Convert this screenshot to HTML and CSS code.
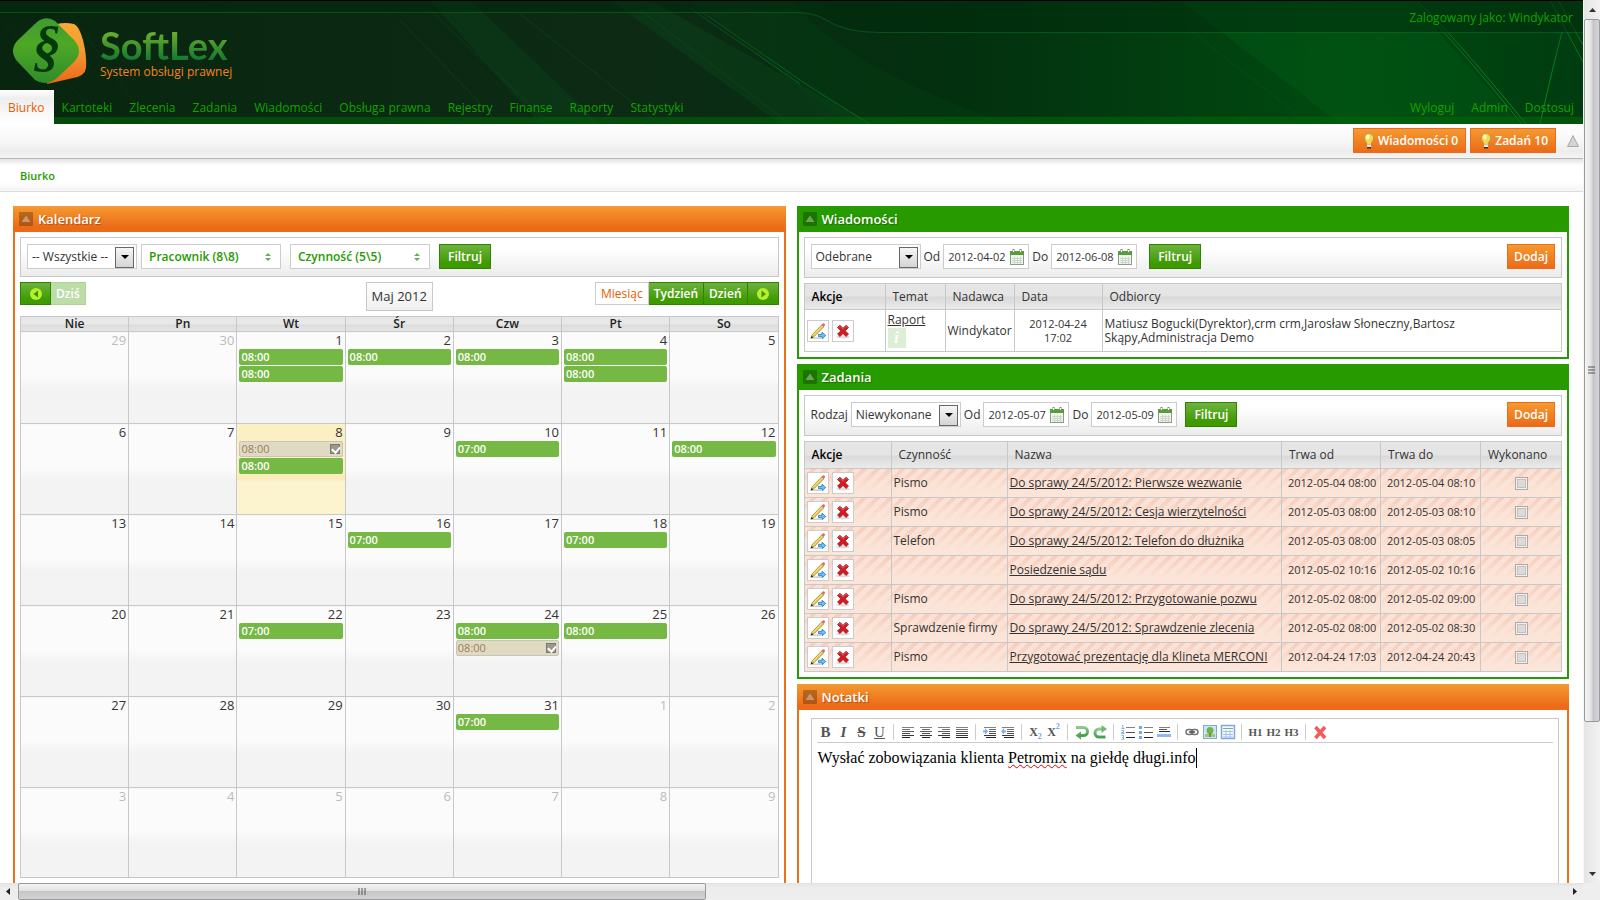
FILE: index.html
```html
<!DOCTYPE html>
<html lang="pl">
<head>
<meta charset="utf-8">
<title>SoftLex - Biurko</title>
<link rel="stylesheet" href="styles.css">
</head>
<body>
<svg class="defs" aria-hidden="true">
  <defs>
    <linearGradient id="gLeaf" x1="0" y1="0" x2="0" y2="1"><stop offset="0" stop-color="#3f9a33"/><stop offset=".4" stop-color="#4ea824"/><stop offset="1" stop-color="#2f8b2c"/></linearGradient>
    <linearGradient id="gSun" x1="0" y1="0" x2="0" y2="1"><stop offset="0" stop-color="#f9a933"/><stop offset=".45" stop-color="#f59a31"/><stop offset="1" stop-color="#ec6519"/></linearGradient>
    <linearGradient id="gLine" x1="0" y1="0" x2="0" y2="1"><stop offset="0" stop-color="#888"/><stop offset="1" stop-color="#222"/></linearGradient>
    <linearGradient id="gGrn" x1="0" y1="0" x2="0" y2="1"><stop offset="0" stop-color="#8fc98a"/><stop offset="1" stop-color="#45a050"/></linearGradient>
    <symbol id="cal" viewBox="0 0 14 16"><rect x=".5" y="2.5" width="13" height="13" fill="#f1f4ef" stroke="#8d9a88"/><rect x="0" y="2" width="14" height="4" fill="#55a032"/><path d="M3.500 0v4M10.500 0v4" stroke="#7d8a78" stroke-width="2"/><path d="M3.500 1v2M10.500 1v2" stroke="#fff"/><path d="M2 9.500h10M2 11.500h10M2 13.500h10M4.500 8v7M7.500 8v7M10.500 8v7" stroke="#c4d2c0" stroke-width=".8"/></symbol>
    <symbol id="edit" viewBox="0 0 18 18"><path d="M3 16.200h9" stroke="#ccc" stroke-width="1.500"/><path d="M2 16l1.200-3.300L12.700 3l1.900 1.900-9.400 9.700z" fill="#e8cf4d" stroke="#8a7420" stroke-width=".7"/><path d="M4 13.300L13.300 4" stroke="#f9ee9c" stroke-width=".8"/><path d="M12.600 2.800l1.100-1.200q1-.8 1.900.1t.2 1.900L14.700 4.900z" fill="#e8626b"/><path d="M1.500 16.700l1.200-2.700 1.500 1.500z" fill="#222"/><path d="M9.500 12.300h3.500V10.200l3.800 3.300-3.800 3.300V14.700H9.500z" fill="#6cc0f6" stroke="#1767ae" stroke-width=".7"/></symbol>
    <symbol id="del" viewBox="0 0 18 18"><ellipse cx="9" cy="15" rx="7" ry="1.500" fill="#ddd"/><path d="M3.500 5.500L6 3.300l3 3 3-3 2.500 2.200-3.300 3.300 3.300 3.300-2.500 2.400-3-3-3 3-2.500-2.400 3.300-3.300z" fill="#cf1c22" stroke="#a30f14" stroke-width=".8"/><path d="M4.500 5.500L6 4.300l3 3 3-3 1.500 1.200" stroke="#e66" fill="none" stroke-width=".8"/></symbol>
    <symbol id="bulb" viewBox="0 0 12 16"><path d="M6 .5a4.500 4.500 0 0 1 4.600 4.600C10.600 8 8.400 8.500 8 11.500H4C3.600 8.500 1.400 8 1.400 5.100A4.500 4.500 0 0 1 6 .5z" fill="#efd95a" stroke="#b9952a" stroke-width=".8"/><ellipse cx="4.800" cy="4" rx="1.800" ry="2.400" fill="#fffbd0"/><path d="M4 11.500h4V14H4z" fill="#e4ecf2"/><path d="M4 14h4v1.500H4z" fill="#33302a"/></symbol>
    <symbol id="up" viewBox="0 0 14 14"><rect width="14" height="14" rx="1" fill="#000" fill-opacity=".25"/><path d="M7 3.500L11.500 10h-9z" fill="#fff" fill-opacity=".35"/></symbol>
    <symbol id="updn" viewBox="0 0 6 8"><path d="M3 0l3 3H0zM3 8l3-3H0z" fill="#6aad4a"/></symbol>
  </defs>
</svg>

<div class="window">
<div class="page">
  <header class="top">
    <svg class="rays" viewBox="0 0 1583 124" preserveAspectRatio="xMaxYMid slice" aria-hidden="true">
      <defs>
        <linearGradient id="gBase"><stop offset="0" stop-color="#08260f"/><stop offset=".4" stop-color="#0d2a15"/><stop offset=".6" stop-color="#03300f"/><stop offset=".85" stop-color="#004a10"/><stop offset="1" stop-color="#003c10"/></linearGradient>
        <linearGradient id="gRay" x1="0" y1="0" x2="1" y2="1"><stop offset="0" stop-color="#0a7a20" stop-opacity=".35"/><stop offset="1" stop-color="#11a02c" stop-opacity=".75"/></linearGradient>
      </defs>
      <rect width="1583" height="124" fill="url(#gBase)"/>
      <path d="M430 0l110 124h60L470 0zM610 0l170 124h90L650 0z" fill="#0b4a1c" fill-opacity=".35"/>
      <path d="M1180 0l160 124h180L1410 0z" fill="#006b18" fill-opacity=".25"/>
      <path d="M690 0Q760 60 850 124H1010Q850 70 790 0z" fill="#005016" fill-opacity=".2"/>
      <path d="M400 20l100 104M430 10l120 114M520 14l140 110M640 10l150 114M1190 30l120 94M1250 0l150 124M1340 0l135 124" stroke="#0f5a20" stroke-opacity=".4" fill="none"/>
      <path d="M0 20l110 104M60 0l90 124" stroke="#0f5a20" stroke-opacity=".2" fill="none"/>
      <path d="M690 8L800 84M702 12L800 80Q830 100 870 124M1412 0Q1447 32 1522 124M1416 0Q1451 32 1526 124M1550 0l33 62M1558 0l25 45M1540 124Q1552 70 1562 32" stroke="url(#gRay)" fill="none"/>
      <path d="M1 1h1582v31H880Q845 32 825 18Q815 12 795 12H0V1z" fill="#002a0c" fill-opacity=".5"/>
      <path d="M0 12.500h795q20 0 30 7 20 13 55 13h703" fill="none" stroke="#0a6a1f" stroke-opacity=".6"/>
      <path d="M0 117h1583v7H0z" fill="#006a08" fill-opacity=".55"/>
      <path d="M0 0h1583v1H0z"/>
    </svg>
    <div class="brand-row">
      <div class="brand">
        <svg class="mark" viewBox="0 0 74 66" role="img" aria-label="SoftLex">
          <path d="M44 6Q52 4 61 6Q66 8 70 22Q74 38 73 50Q72 58 60 60L34 66z" fill="url(#gSun)"/>
          <path d="M24 4Q33-3 42 3L61 22Q71 33 61 44L44 60Q33 69 22 62L4 43Q-4 33 4 23z" fill="url(#gLeaf)"/>
          <text x="34" y="47" text-anchor="middle" class="para">§</text>
        </svg>
        <div class="names"><span class="name">SoftLex</span><span class="tagline">System obsługi prawnej</span></div>
      </div>
      <div class="login">Zalogowany jako: Windykator</div>
    </div>
    <nav class="menu">
      <a class="active" href="#">Biurko</a><a href="#">Kartoteki</a><a href="#">Zlecenia</a><a href="#">Zadania</a><a href="#">Wiadomości</a><a href="#">Obsługa prawna</a><a href="#">Rejestry</a><a href="#">Finanse</a><a href="#">Raporty</a><a href="#">Statystyki</a>
      <span class="spring"></span>
      <a href="#">Wyloguj</a><a href="#">Admin</a><a href="#">Dostosuj</a>
    </nav>
  </header>
  <div class="alerts">
    <button class="btn orange"><svg class="bulb"><use href="#bulb"/></svg>Wiadomości 0</button>
    <button class="btn orange"><svg class="bulb"><use href="#bulb"/></svg>Zadań 10</button>
    <svg class="tri" viewBox="0 0 12 12" aria-hidden="true"><path d="M6 .5L11.500 11.500H.5z" fill="#d4d4d4" stroke="#aaa"/></svg>
  </div>
  <div class="crumbs"><a href="#">Biurko</a></div>

  <main class="desk">
    <section class="panel orange-panel">
      <h2><svg class="fold"><use href="#up"/></svg>Kalendarz</h2>
      <div class="body">
        <form class="filter">
          <span class="sel"><select aria-label="Rodzaj kalendarza"><option>-- Wszystkie --</option></select></span>
          <button type="button" class="multi">Pracownik (8\8)<svg class="updn"><use href="#updn"/></svg></button>
          <button type="button" class="multi second">Czynność (5\5)<svg class="updn"><use href="#updn"/></svg></button>
          <button type="button" class="btn green wide">Filtruj</button>
        </form>
        <div class="calbar">
          <div class="group">
            <button class="btn green arrow" aria-label="Poprzedni"><svg viewBox="0 0 12 12"><circle cx="6" cy="6" r="6" fill="#b5f02a"/><path d="M8 2.500v7L3.500 6z" fill="#3d8e0c"/></svg></button><button class="btn today" disabled>Dziś</button>
          </div>
          <div class="month">Maj 2012</div>
          <div class="group right">
            <button class="btn view">Miesiąc</button><button class="btn green">Tydzień</button><button class="btn green">Dzień</button><button class="btn green arrow" aria-label="Następny"><svg viewBox="0 0 12 12"><circle cx="6" cy="6" r="6" fill="#b5f02a"/><path d="M4.500 2.500v7L9 6z" fill="#3d8e0c"/></svg></button>
          </div>
        </div>
        <table class="cal">
          <thead><tr><th>Nie</th><th>Pn</th><th>Wt</th><th>Śr</th><th>Czw</th><th>Pt</th><th>So</th></tr></thead>
          <tbody>
            <tr><td class="off"><b>29</b></td><td class="off"><b>30</b></td><td><b>1</b><i>08:00</i><i>08:00</i></td><td><b>2</b><i>08:00</i></td><td><b>3</b><i>08:00</i></td><td><b>4</b><i>08:00</i><i>08:00</i></td><td><b>5</b></td></tr>
            <tr><td><b>6</b></td><td><b>7</b></td><td class="now"><b>8</b><i class="done">08:00<input type="checkbox" checked aria-label="Wykonano"></i><i>08:00</i></td><td><b>9</b></td><td><b>10</b><i>07:00</i></td><td><b>11</b></td><td><b>12</b><i>08:00</i></td></tr>
            <tr><td><b>13</b></td><td><b>14</b></td><td><b>15</b></td><td><b>16</b><i>07:00</i></td><td><b>17</b></td><td><b>18</b><i>07:00</i></td><td><b>19</b></td></tr>
            <tr><td><b>20</b></td><td><b>21</b></td><td><b>22</b><i>07:00</i></td><td><b>23</b></td><td><b>24</b><i>08:00</i><i class="done">08:00<input type="checkbox" checked aria-label="Wykonano"></i></td><td><b>25</b><i>08:00</i></td><td><b>26</b></td></tr>
            <tr><td><b>27</b></td><td><b>28</b></td><td><b>29</b></td><td><b>30</b></td><td><b>31</b><i>07:00</i></td><td class="off"><b>1</b></td><td class="off"><b>2</b></td></tr>
            <tr><td class="off"><b>3</b></td><td class="off"><b>4</b></td><td class="off"><b>5</b></td><td class="off"><b>6</b></td><td class="off"><b>7</b></td><td class="off"><b>8</b></td><td class="off"><b>9</b></td></tr>
          </tbody>
        </table>
      </div>
    </section>

    <div class="column">
      <section class="panel green-panel">
        <h2><svg class="fold"><use href="#up"/></svg>Wiadomości</h2>
        <div class="body">
          <form class="filter">
            <span class="sel"><select aria-label="Folder"><option>Odebrane</option></select></span>
            <label for="mOd">Od</label><span class="date"><input id="mOd" type="text" value="2012-04-02"><svg><use href="#cal"/></svg></span>
            <label for="mDo">Do</label><span class="date"><input id="mDo" type="text" value="2012-06-08"><svg><use href="#cal"/></svg></span>
            <button type="button" class="btn green wide submit">Filtruj</button>
            <button type="button" class="btn orange add">Dodaj</button>
          </form>
          <table class="list mail">
            <colgroup><col class="w81"><col class="w60"><col class="w69"><col class="w88"><col></colgroup>
            <thead><tr><th class="sorted">Akcje</th><th>Temat</th><th>Nadawca</th><th>Data</th><th>Odbiorcy</th></tr></thead>
            <tbody><tr>
              <td><button class="ico" aria-label="Edytuj"><svg><use href="#edit"/></svg></button><button class="ico" aria-label="Usuń"><svg><use href="#del"/></svg></button></td>
              <td class="subject"><a href="#">Raport</a><span class="info">i</span></td>
              <td>Windykator</td><td class="when">2012-04-24 17:02</td>
              <td><div class="people">Matiusz Bogucki(Dyrektor),crm crm,Jarosław Słoneczny,Bartosz Skąpy,Administracja Demo</div></td>
            </tr></tbody>
          </table>
        </div>
      </section>

      <section class="panel green-panel">
        <h2><svg class="fold"><use href="#up"/></svg>Zadania</h2>
        <div class="body">
          <form class="filter">
            <label for="zR">Rodzaj</label><span class="sel"><select id="zR"><option>Niewykonane</option></select></span>
            <label for="zOd">Od</label><span class="date"><input id="zOd" type="text" value="2012-05-07"><svg><use href="#cal"/></svg></span>
            <label for="zDo">Do</label><span class="date"><input id="zDo" type="text" value="2012-05-09"><svg><use href="#cal"/></svg></span>
            <button type="button" class="btn green wide near">Filtruj</button>
            <button type="button" class="btn orange add">Dodaj</button>
          </form>
          <table class="list tasks">
            <colgroup><col class="w87"><col class="w116"><col><col class="w99"><col class="w100"><col class="w81"></colgroup>
            <thead><tr><th class="sorted">Akcje</th><th>Czynność</th><th>Nazwa</th><th>Trwa od</th><th>Trwa do</th><th>Wykonano</th></tr></thead>
            <tbody>
              <tr><td><button class="ico" aria-label="Edytuj"><svg><use href="#edit"/></svg></button><button class="ico" aria-label="Usuń"><svg><use href="#del"/></svg></button></td><td>Pismo</td><td><a href="#">Do sprawy 24/5/2012: Pierwsze wezwanie</a></td><td class="when">2012-05-04 08:00</td><td class="when">2012-05-04 08:10</td><td class="chk"><input type="checkbox" aria-label="Wykonano"></td></tr>
              <tr><td><button class="ico" aria-label="Edytuj"><svg><use href="#edit"/></svg></button><button class="ico" aria-label="Usuń"><svg><use href="#del"/></svg></button></td><td>Pismo</td><td><a href="#">Do sprawy 24/5/2012: Cesja wierzytelności</a></td><td class="when">2012-05-03 08:00</td><td class="when">2012-05-03 08:10</td><td class="chk"><input type="checkbox" aria-label="Wykonano"></td></tr>
              <tr><td><button class="ico" aria-label="Edytuj"><svg><use href="#edit"/></svg></button><button class="ico" aria-label="Usuń"><svg><use href="#del"/></svg></button></td><td>Telefon</td><td><a href="#">Do sprawy 24/5/2012: Telefon do dłużnika</a></td><td class="when">2012-05-03 08:00</td><td class="when">2012-05-03 08:05</td><td class="chk"><input type="checkbox" aria-label="Wykonano"></td></tr>
              <tr><td><button class="ico" aria-label="Edytuj"><svg><use href="#edit"/></svg></button><button class="ico" aria-label="Usuń"><svg><use href="#del"/></svg></button></td><td></td><td><a href="#">Posiedzenie sądu</a></td><td class="when">2012-05-02 10:16</td><td class="when">2012-05-02 10:16</td><td class="chk"><input type="checkbox" aria-label="Wykonano"></td></tr>
              <tr><td><button class="ico" aria-label="Edytuj"><svg><use href="#edit"/></svg></button><button class="ico" aria-label="Usuń"><svg><use href="#del"/></svg></button></td><td>Pismo</td><td><a href="#">Do sprawy 24/5/2012: Przygotowanie pozwu</a></td><td class="when">2012-05-02 08:00</td><td class="when">2012-05-02 09:00</td><td class="chk"><input type="checkbox" aria-label="Wykonano"></td></tr>
              <tr><td><button class="ico" aria-label="Edytuj"><svg><use href="#edit"/></svg></button><button class="ico" aria-label="Usuń"><svg><use href="#del"/></svg></button></td><td>Sprawdzenie firmy</td><td><a href="#">Do sprawy 24/5/2012: Sprawdzenie zlecenia</a></td><td class="when">2012-05-02 08:00</td><td class="when">2012-05-02 08:30</td><td class="chk"><input type="checkbox" aria-label="Wykonano"></td></tr>
              <tr><td><button class="ico" aria-label="Edytuj"><svg><use href="#edit"/></svg></button><button class="ico" aria-label="Usuń"><svg><use href="#del"/></svg></button></td><td>Pismo</td><td><a href="#">Przygotować prezentację dla Klineta MERCONI</a></td><td class="when">2012-04-24 17:03</td><td class="when">2012-04-24 20:43</td><td class="chk"><input type="checkbox" aria-label="Wykonano"></td></tr>
            </tbody>
          </table>
        </div>
      </section>

      <section class="panel orange-panel">
        <h2><svg class="fold"><use href="#up"/></svg>Notatki</h2>
        <div class="body notes">
          <div class="editor">
            <div class="tools">
              <button class="big bold">B</button><button class="big ital">I</button><button class="big strike">S</button><button class="big under">U</button>
              <hr>
              <button aria-label="Do lewej"><svg viewBox="0 0 16 16"><path d="M2 3h12v1H2zM2 5h8v1H2zM2 7h12v1H2zM2 9h8v1H2zM2 11h12v1H2zM2 13h8v1H2z" fill="url(#gLine)"/></svg></button>
              <button aria-label="Do środka"><svg viewBox="0 0 16 16"><path d="M2 3h12v1H2zM4 5h8v1H4zM2 7h12v1H2zM4 9h8v1H4zM2 11h12v1H2zM4 13h8v1H4z" fill="url(#gLine)"/></svg></button>
              <button aria-label="Do prawej"><svg viewBox="0 0 16 16"><path d="M2 3h12v1H2zM6 5h8v1H6zM2 7h12v1H2zM6 9h8v1H6zM2 11h12v1H2zM6 13h8v1H6z" fill="url(#gLine)"/></svg></button>
              <button aria-label="Wyjustuj"><svg viewBox="0 0 16 16"><path d="M2 3h12v1H2zM2 5h12v1H2zM2 7h12v1H2zM2 9h12v1H2zM2 11h12v1H2zM2 13h12v1H2z" fill="url(#gLine)"/></svg></button>
              <hr>
              <button aria-label="Zwiększ wcięcie"><svg viewBox="0 0 16 16"><path d="M2 3h12v1H2zM7 5h7v1H7zM7 7h7v1H7zM7 9h7v1H7zM2 11h12v1H2zM4 13h10v1H4z" fill="url(#gLine)"/><path d="M1 6.500h2V4l3 3.500-3 3V8.500H1z" fill="#78aef0"/></svg></button>
              <button aria-label="Zmniejsz wcięcie"><svg viewBox="0 0 16 16"><path d="M2 3h12v1H2zM7 5h7v1H7zM7 7h7v1H7zM7 9h7v1H7zM2 11h12v1H2zM4 13h10v1H4z" fill="url(#gLine)"/><path d="M6 6.500H4V4L1 7.500l3 3V8.500h2z" fill="#78aef0"/></svg></button>
              <hr>
              <button class="script">X<sub>2</sub></button><button class="script">X<sup>2</sup></button>
              <hr>
              <button aria-label="Cofnij"><svg viewBox="0 0 16 16"><path d="M2 3.500h7.500a4 4 0 0 1 0 8H6" fill="none" stroke="url(#gGrn)" stroke-width="3"/><path d="M7 7.500v8L1.500 11.500z" fill="#52a852"/></svg></button>
              <button aria-label="Ponów"><svg viewBox="0 0 16 16"><path d="M11 5h-4a4 4 0 0 0 0 8h6.500" fill="none" stroke="url(#gGrn)" stroke-width="3"/><path d="M9.500 1v8l5.500-4z" fill="#70b970"/></svg></button>
              <hr>
              <button aria-label="Lista numerowana"><svg viewBox="0 0 16 16"><path d="M6 3h9v1H6zM6 8h9v1H6zM6 13h9v1H6z" fill="url(#gLine)"/><path d="M2 1.500h1v3M1.500 4.500h3M1.500 6.500h2v2h-2v1h3M1.500 11.500h2v4h-2M2 13.500h2" fill="none" stroke="#78a8ea" stroke-width=".9"/></svg></button>
              <button aria-label="Lista punktowana"><svg viewBox="0 0 16 16"><path d="M6 3h9v1H6zM6 8h9v1H6zM6 13h9v1H6z" fill="url(#gLine)"/><path d="M1 2h3v3H1zM1 7h3v3H1zM1 12h3v3H1z" fill="#78a8ea"/></svg></button>
              <button aria-label="Linia"><svg viewBox="0 0 16 16"><path d="M3 3h11v1H3zM3 5h8v1H3zM3 7h11v1H3z" fill="url(#gLine)"/><path d="M1 10h14v3H1z" fill="#8fb9f2"/></svg></button>
              <hr>
              <button aria-label="Odnośnik"><svg viewBox="0 0 16 16"><rect x="2" y="5.500" width="7" height="5" rx="2.500" fill="none" stroke="#777" stroke-width="1.500"/><rect x="7" y="5.500" width="7" height="5" rx="2.500" fill="none" stroke="#777" stroke-width="1.500"/><path d="M5 8h6" stroke="#555" stroke-width="1.500"/></svg></button>
              <button aria-label="Obraz"><svg viewBox="0 0 16 16"><rect x="1.500" y="1.500" width="13" height="13" fill="#cfe2fb" stroke="#82a9de"/><rect x="3" y="10" width="10" height="3" fill="#9ccb6a"/><circle cx="8" cy="6.500" r="3.500" fill="#6cb64c"/><path d="M8 9v4" stroke="#8a6a3a" stroke-width="1.500"/></svg></button>
              <button aria-label="Tabela"><svg viewBox="0 0 16 16"><rect x="1.500" y="1.500" width="13" height="13" fill="#f3f8ff" stroke="#82a9de" stroke-width="1.500"/><path d="M3 4.500h10" stroke="#7ab85a"/><path d="M3 7.500h10M3 10.500h10M3 13h10M6 6v8M10 6v8" stroke="#a5c2ea"/></svg></button>
              <hr>
              <button class="h">H1</button><button class="h">H2</button><button class="h">H3</button>
              <hr>
              <button aria-label="Usuń formatowanie"><svg viewBox="0 0 16 16"><path d="M3.500 3l9.500 11M13 3L3.500 14" stroke="#f25b5b" stroke-width="3.500"/></svg></button>
            </div>
            <div class="text" contenteditable="true" spellcheck="false">Wysłać zobowiązania klienta <span class="typo">Petromix</span> na giełdę długi.info<span class="caret"></span></div>
          </div>
        </div>
      </section>
    </div>
  </main>
</div>
<div class="vbar" aria-hidden="true">
  <svg viewBox="0 0 17 19"><path d="M8.500 8l3.500 4H5z" fill="#333"/></svg>
  <div class="vthumb"><svg viewBox="0 0 8 9"><path d="M0 1h7M0 4h7M0 7h7" stroke="#555"/></svg></div>
  <div class="vrest"></div>
  <svg viewBox="0 0 17 19"><path d="M8.500 12L12 8H5z" fill="#333"/></svg>
</div>
<div class="hbar" aria-hidden="true">
  <svg viewBox="0 0 18 17"><path d="M6 8.500l4-3.500v7z" fill="#222"/></svg>
  <div class="hthumb"><svg viewBox="0 0 9 8"><path d="M1 0v7M4 0v7M7 0v7" stroke="#555"/></svg></div>
  <div class="hrest"></div>
  <svg viewBox="0 0 18 17"><path d="M12 8.500L8 5v7z" fill="#222"/></svg>
</div>
<div class="corner"></div>
</div>
</body>
</html>
```
FILE: styles.css
```css
* { box-sizing: border-box; }
body {
  margin: 0;
  font: 12px/14px "Open Sans", "Noto Sans", sans-serif;
  color: #333;
  background: #fff;
}
button, input, select { font: inherit; color: inherit; margin: 0; border-radius: 0; }
button { cursor: pointer; }
.defs { display: block; width: 0; height: 0; }

.window {
  display: grid;
  grid-template: minmax(0, 1fr) 17px / minmax(0, 1fr) 17px;
  height: 100vh;
  overflow: hidden;
}
.page { overflow: hidden; background: #fff; }

/* header */
.top { position: relative; height: 124px; display: flex; flex-direction: column; background: #03300f; }
.rays { position: absolute; inset: 0; width: 100%; height: 100%; }
.brand-row { position: relative; flex: 1; display: flex; justify-content: space-between; }
.brand { display: flex; padding: 18px 0 0 13px; gap: 13px; }
.mark { width: 74px; height: 66px; overflow: visible; }
.para { font: italic bold 56px "Liberation Serif", serif; fill: #033a0b; }
.names { display: flex; flex-direction: column; padding-top: 7px; }
.name {
  font: bold 38px/40px Lato, sans-serif;
  background: linear-gradient(#6aac2c 20%, #187a30 85%);
  -webkit-background-clip: text;
  background-clip: text;
  color: transparent;
}
.tagline { color: #f5821f; line-height: 14px; }
.login { padding: 11px 10px 0 0; color: #12a300; }
.menu { position: relative; display: flex; height: 34px; color: #12a300; }
.menu a { padding: 11px 9px 0 8px; color: inherit; text-decoration: none; }
.menu .active { color: #e65c00; background: linear-gradient(#fff, #eee 25%, #fff); }
.spring { flex: 1; }

.alerts {
  display: flex; justify-content: flex-end; align-items: flex-start; gap: 4px;
  height: 35px; padding: 4px 4px 0;
  background: linear-gradient(#fff, #f8f8f8 45%, #ededed 80%, #f4f4f4);
  border-bottom: 1px solid #b8b8b8;
}
.bulb { width: 12px; height: 16px; margin-right: 3px; }
.tri { width: 12px; height: 12px; margin: 7px 0 0 7px; }
.crumbs {
  height: 33px; padding: 10px 20px;
  background: linear-gradient(#e4e4e4, #fff 20%, #fff 70%, #f5f5f5);
  border-bottom: 1px solid #ddd;
  font-size: 11px;
}
.crumbs a { color: #279a00; text-decoration: none; font-weight: 600; }

/* buttons */
.btn {
  display: inline-flex; align-items: center; justify-content: center;
  height: 25px; padding: 0 6px;
  border: 1px solid #2f8300; color: #fff; font-weight: 600;
  white-space: nowrap;
}
.wide { padding: 0 8px; }
.green { background: linear-gradient(#6db33f, #3f9a00 80%); }
.orange { background: linear-gradient(#f49a30, #ec6a18); border-color: #ec6a18; }
.alerts .btn { padding: 0 7px 0 9px; }

/* panels */
.desk {
  display: grid; grid-template-columns: minmax(0, 1fr) minmax(0, 1fr); gap: 11px;
  padding: 14px 14px 0 13px; align-items: start;
}
.column { display: grid; gap: 5px; }
.panel { border: 2px solid #ec6f1a; border-top: 0; }
.panel h2 {
  display: flex; align-items: center; gap: 5px;
  height: 26px; margin: 0 -2px; padding: 0 6px;
  color: #fff; font: 600 13px/26px "Open Sans", sans-serif;
  text-shadow: 1px 1px 1px rgba(0, 0, 0, .3);
  background: linear-gradient(#f49a30, #ec6a18 85%);
}
.green-panel { border-color: #279a00; }
.green-panel h2 { background: #279a00; }
.fold { width: 14px; height: 14px; }
.body { padding: 5px; }
.orange-panel .body { padding-bottom: 12px; }

.filter {
  display: flex; align-items: center; gap: 4px;
  height: 40px; margin: 0 0 5px; padding: 0 6px 1px;
  border: 1px solid #c8c8c8;
  background: linear-gradient(#fff 30%, #ececec);
}
.column .filter { height: 41px; gap: 3px; padding-bottom: 2px; }
.sel { position: relative; width: 110px; height: 25px; border: 1px solid #ccc; background: #fff; }
.sel select {
  appearance: none; width: 100%; height: 23px; padding: 0 22px 0 4px;
  border: 0; background: none;
}
.sel::before {
  content: ""; position: absolute; right: 2px; top: 2px; width: 17px; height: 19px;
  border: 1px solid #666; background: linear-gradient(#f6f6f6, #d4d4d4); pointer-events: none;
}
.sel::after {
  content: ""; position: absolute; right: 7px; top: 10px;
  border: 4px solid transparent; border-top-color: #000; border-bottom: 0; pointer-events: none;
}
.multi {
  display: flex; align-items: center; justify-content: space-between;
  width: 140px; height: 25px; padding: 0 9px 0 7px;
  border: 1px solid #ccc; background: #fff; color: #279a00; font-weight: 600;
}
.second { margin: 0 5px; }
.updn { width: 6px; height: 8px; }
.date {
  display: flex; align-items: center; justify-content: space-between;
  width: 86px; height: 25px; padding: 0 4px; border: 1px solid #ccc; background: #fff;
}
.date input { width: 60px; padding: 0; border: 0; background: none; font-size: 11px; outline: 0; }
.date svg { width: 14px; height: 16px; flex: none; }
.submit { margin-left: 9px; }
.near { margin-left: 5px; }
.add { margin-left: auto; }

.calbar { display: grid; grid-template-columns: 1fr auto 1fr; align-items: start; margin-bottom: 5px; }
.group { display: flex; }
.group .btn { height: 23px; padding: 0 5px; }
.group .btn + .btn { border-left-width: 0; }
.group .arrow { width: 31px; }
.arrow svg { width: 12px; height: 12px; }
.group .today { background: #bcdca8; border-color: #b0d09c; }
.right { justify-content: flex-end; }
.group .view { background: #fff; border-color: #ccc; color: #e65c00; font-weight: 400; }
.month {
  height: 29px; padding: 0 5px; border: 1px solid #c8c8c8; line-height: 27px; font-size: 13px;
  background: linear-gradient(#fff, #f0f0f0);
}

/* calendar */
.cal { width: 100%; table-layout: fixed; border-collapse: collapse; }
.cal th, .cal td { border: 1px solid #c8c8c8; padding: 0; }
.cal th { height: 15px; font-weight: 600; color: #222; background: linear-gradient(#e8e8e8 50%, #dcdcdc 50%, #e4e4e4); }
.cal td { height: 91px; padding: 1px 2px 0; vertical-align: top; background: linear-gradient(#fbfbfb 48%, #f3f3f3 62%); }
.cal tr:first-child td { height: 92px; }
.cal tr:last-child td { height: 90px; }
.cal b { display: block; height: 16px; font: 13px/15px "Open Sans", sans-serif; text-align: right; }
.cal .off b { color: #bbb; }
.cal .now { background: linear-gradient(#fbf0c4 50%, #faebb8 60%, #fcf3cf 64%); }
.cal i {
  display: flex; align-items: center; justify-content: space-between;
  height: 16px; margin-bottom: 1px; padding: 0 2px;
  border-radius: 2px; background: #76b844; color: #fff;
  font: 600 11px/14px "Open Sans", sans-serif;
}
.cal .done { border: 1px solid #c8c4b8; background: #e1dac3; color: #997f5c; font-weight: 400; padding: 0 2px 0 1px; }
.done input {
  appearance: none; position: relative; width: 10px; height: 10px;
  border: 1px solid #777; background: #9c988a;
}
.done input::after {
  content: ""; position: absolute; left: 2px; top: 0; width: 4px; height: 6px;
  border: solid #fff; border-width: 0 2px 2px 0; transform: rotate(42deg);
}

/* lists */
.list { width: 100%; table-layout: fixed; border-collapse: collapse; }
.list th, .list td { border: 1px solid #c8c8c8; padding: 0 2px; text-align: left; }
.list th { height: 27px; padding: 0 7px; font-weight: 400; background: linear-gradient(#e5e5e5 50%, #d9d9d9 50%, #ebebeb); }
.list .sorted { color: #000; font-weight: 600; }
.list td { height: 29px; white-space: nowrap; }
.list a { color: #333; }
.mail th { height: 26px; }
.mail td { height: 42px; }
.mail .when { white-space: normal; padding: 0 10px; text-align: center; }
.mail .subject a { display: block; margin-bottom: 1px; }
.when { font-size: 11px; }
.tasks .when { padding-left: 6px; }
.people { max-width: 370px; white-space: normal; }
.info {
  display: block; width: 18px; height: 20px; background: #dcefd6; color: #fff;
  font: italic bold 16px/20px "Liberation Serif", serif; text-align: center;
}
.ico { width: 22px; height: 22px; padding: 1px; margin-right: 3px; border: 1px solid #ccc; background: #fff; vertical-align: middle; }
.ico svg { display: block; width: 18px; height: 18px; }
.tasks tbody tr {
  background:
    linear-gradient(rgba(251, 229, 216, .1), #fbe5d8 80%),
    repeating-linear-gradient(135deg, #fbe0d6 0 5px, #f6cbb9 5px 9px);
}
.chk input {
  appearance: none; display: block; width: 13px; height: 13px; margin: 0 auto;
  border: 1px solid #aaa; background: #dedad8; box-shadow: inset 0 0 0 1px #f3f0ee, inset 0 0 0 2px #c4c0be;
}
.list .chk { padding: 0; }
.w60 { width: 60px; }
.w69 { width: 69px; }
.w81 { width: 81px; }
.w87 { width: 87px; }
.w88 { width: 88px; }
.w99 { width: 99px; }
.w100 { width: 100px; }
.w116 { width: 116px; }

/* notes */
.notes { padding: 8px 8px 0 12px; }
.editor { min-height: 200px; padding: 4px 5px 0; border: 1px solid #c8c8c8; }
.tools { display: flex; height: 20px; border-bottom: 1px solid #ccc; }
.tools button {
  display: flex; align-items: center; justify-content: center;
  width: 18px; height: 18px; padding: 0; border: 0; background: none;
  color: #555; font: bold 11px/16px "Liberation Serif", serif;
}
.tools svg { width: 16px; height: 16px; }
.tools hr { width: 1px; height: 16px; margin: 1px 5px 0 4px; border: 0; background: #ccc; }
.tools .big { font-size: 15px; }
.tools .ital { font-style: italic; }
.tools .strike { text-decoration: line-through; }
.tools .under { font-weight: 400; text-decoration: underline; }
.script sub, .script sup { font-size: 8px; line-height: 8px; color: #78a8ea; }
.tools .script { font-size: 12px; }
.script sub { align-self: flex-end; }
.script sup { align-self: flex-start; }
.text { padding: 5px 1px; font: 16px/20px "Liberation Serif", serif; color: #000; outline: 0; }
.typo { text-decoration: underline wavy #e00 1px; }
.caret { display: inline-block; width: 1px; height: 20px; background: #000; vertical-align: bottom; }

/* scroll bars */
.vbar, .hbar { display: flex; background: linear-gradient(#e2e2e2, #ececec 20%, #eee); }
.vbar { flex-direction: column; border-left: 1px solid #f6f6f6; background: linear-gradient(90deg, #e4e4e4, #f2f2f2); }
.vbar > svg { width: 17px; height: 19px; }
.hbar > svg { width: 18px; height: 17px; }
.vthumb, .hthumb { display: flex; align-items: center; justify-content: center; border: 1px solid #999; border-radius: 2px; }
.vthumb { flex: 703; background: linear-gradient(90deg, #f6f6f6, #e4e4e6 40%, #c6c6ca 60%, #d6d6da); }
.vthumb svg { width: 8px; height: 9px; }
.vrest { flex: 142; }
.hthumb { flex: 687; background: linear-gradient(#f4f4f4, #e2e2e2 45%, #c6c6c8 50%, #d2d2d4); }
.hthumb svg { width: 9px; height: 8px; }
.hrest { flex: 860; }
.corner { background: #eee; }
```
